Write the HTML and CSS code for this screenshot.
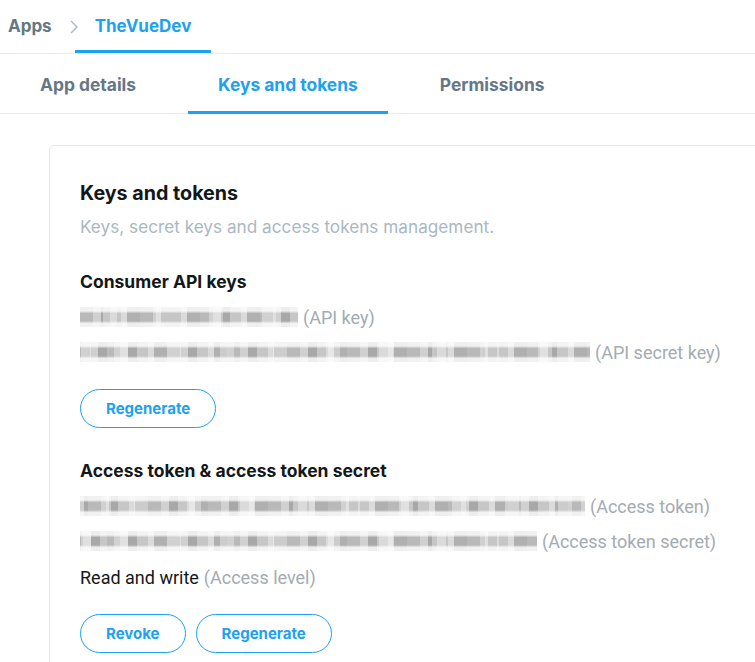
FILE: index.html
```html
<!DOCTYPE html>
<html>
<head>
<meta charset="utf-8">
<link rel="stylesheet" href="styles.css">
</head>
<body>
<nav class="crumbs">
  <span class="crumb">Apps</span>
  <svg class="chev" width="8" height="14" viewBox="0 0 8 14"><polyline points="1,1 7,7 1,13" fill="none" stroke="#aab8c2" stroke-width="1.4"/></svg>
  <span class="crumb crumb-active">TheVueDev</span>
</nav>
<div class="tabs">
  <span class="tab">App details</span>
  <span class="tab tab-active">Keys and tokens</span>
  <span class="tab">Permissions</span>
</div>
<section class="card">
  <h1 class="title">Keys and tokens</h1>
  <p class="subtitle">Keys, secret keys and access tokens management.</p>

  <h2 class="section">Consumer API keys</h2>
  <div class="row row-first"><span class="blur" style="width:218px"></span><span class="note">(API key)</span></div>
  <div class="row"><span class="blur blur-b" style="width:510px"></span><span class="note">(API secret key)</span></div>
  <div class="actions"><button class="btn">Regenerate</button></div>

  <h2 class="section">Access token &amp; access token secret</h2>
  <div class="row row-first"><span class="blur blur-c" style="width:505px"></span><span class="note">(Access token)</span></div>
  <div class="row"><span class="blur blur-b" style="width:457px"></span><span class="note">(Access token secret)</span></div>
  <div class="row row-level"><span class="value">Read and write</span><span class="note note-tight">(Access level)</span></div>
  <div class="actions"><button class="btn">Revoke</button><button class="btn">Regenerate</button></div>
</section>
</body>
</html>
```
FILE: styles.css
```css
* { box-sizing: border-box; }
html, body { margin: 0; padding: 0; background: #fff; overflow: hidden; }
body { font-family: Inter, "Noto Sans", sans-serif; color: #14171a; }

.crumbs {
  display: flex;
  align-items: center;
  height: 54px;
  border-bottom: 1px solid #e6ecf0;
  padding-left: 8px;
}
.crumb {
  font-size: 17px;
  font-weight: 700;
  color: #657786;
  line-height: 53px;
  height: 53px;
  border-bottom: 3px solid transparent;
}
.chev { margin: 0 17px 0 18px; }
.crumb-active {
  color: #1da1f2;
  border-bottom-color: #1da1f2;
  padding: 0 20px;
  margin-left: -20px;
}

.tabs {
  display: flex;
  gap: 22px;
  height: 60px;
  padding-left: 10px;
  border-bottom: 1px solid #e6ecf0;
}
.tab {
  font-size: 17.4px;
  font-weight: 700;
  color: #657786;
  padding: 0 30px;
  height: 60px;
  line-height: 62px;
  border-bottom: 3px solid transparent;
}
.tab-active { color: #1da1f2; border-bottom-color: #1da1f2; }

.card {
  margin: 31px -30px 0 49px;
  border: 1px solid #e1e8ed;
  border-radius: 5px;
  padding: 35px 30px 40px 30px;
}
.title {
  margin: 0;
  font-size: 19.7px;
  line-height: 24px;
  font-weight: 700;
}
.subtitle {
  margin: 10px 0 0;
  font-size: 17.2px;
  line-height: 24px;
  color: #aab8c2;
  font-weight: 400;
}
.section {
  margin: 31px 0 0;
  font-size: 17.5px;
  line-height: 24px;
  font-weight: 700;
}
.row {
  display: flex;
  align-items: center;
  height: 24px;
  margin-top: 11px;
}
.row-level { margin-top: 12px; }
.blur {
  height: 20px;
  flex: none;
  margin-right: 5px;
  background:
    linear-gradient(to bottom, rgba(255,255,255,0.8) 0 20%, rgba(255,255,255,0) 32% 70%, rgba(255,255,255,0.8) 82% 100%),
    repeating-linear-gradient(90deg, rgba(255,255,255,0) 0 23px, rgba(255,255,255,0.35) 23px 37px, rgba(255,255,255,0) 37px 53px),
    repeating-linear-gradient(90deg, #b9b9b9 0 13px, #d0d0d0 13px 21px, #a8a8a8 21px 30px, #c6c6c6 30px 41px, #dadada 41px 47px, #b0b0b0 47px 60px);
  filter: blur(0.7px);
}
.blur-b { background-position: 0 0, 11px 0, 27px 0; }
.blur-c { background-position: 0 0, 31px 0, 8px 0; }
.note {
  font-family: Roboto, Inter, sans-serif;
  font-size: 18px;
  font-weight: 400;
  color: #a3abb3;
}
.value {
  font-family: Roboto, Inter, sans-serif;
  font-size: 18px;
  color: #14171a;
}
.note-tight { margin-left: 5px; }
.actions {
  display: flex;
  gap: 10px;
  margin-top: 25px;
  margin-bottom: 30px;
}
.btn {
  font-family: Inter, sans-serif;
  height: 39px;
  padding: 0 25px;
  border: 1px solid #1da1f2;
  border-radius: 20px;
  background: #fff;
  color: #1da1f2;
  font-size: 15px;
  font-weight: 700;
}
```
